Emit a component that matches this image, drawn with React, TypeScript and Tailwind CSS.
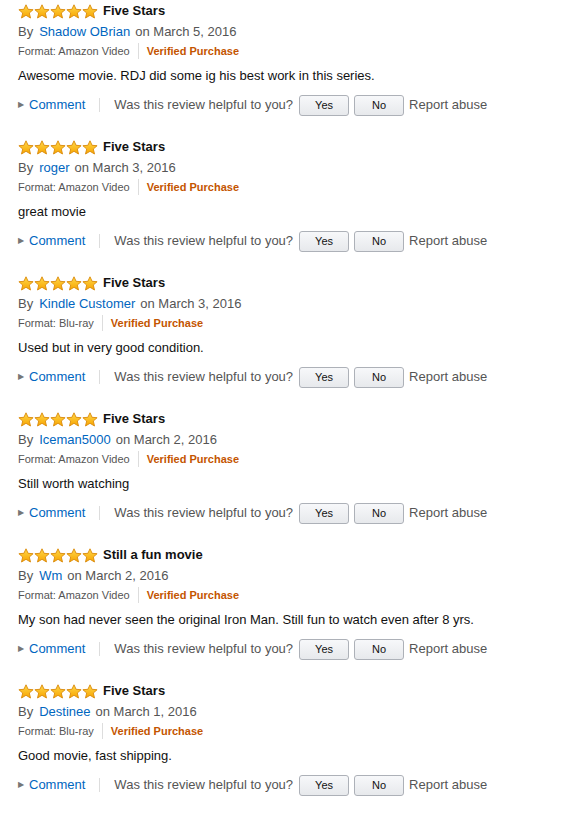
const reviews = [
  { title: "Five Stars", author: "Shadow OBrian", date: "March 5, 2016", format: "Amazon Video", body: "Awesome movie. RDJ did some ig his best work in this series." },
  { title: "Five Stars", author: "roger", date: "March 3, 2016", format: "Amazon Video", body: "great movie" },
  { title: "Five Stars", author: "Kindle Customer", date: "March 3, 2016", format: "Blu-ray", body: "Used but in very good condition." },
  { title: "Five Stars", author: "Iceman5000", date: "March 2, 2016", format: "Amazon Video", body: "Still worth watching" },
  { title: "Still a fun movie", author: "Wm", date: "March 2, 2016", format: "Amazon Video", body: "My son had never seen the original Iron Man. Still fun to watch even after 8 yrs." },
  { title: "Five Stars", author: "Destinee", date: "March 1, 2016", format: "Blu-ray", body: "Good movie, fast shipping." },
];

function Star() {
  return (
    <svg width="16" height="15" viewBox="0 0 16 15">
      <defs>
        <linearGradient id="starfill" x1="0" y1="0" x2="0" y2="1">
          <stop offset="0" stopColor="#ffd84a" />
          <stop offset="1" stopColor="#f7a400" />
        </linearGradient>
      </defs>
      <path
        d="M8 0.8 L10.1 5.3 L15.1 5.7 L11.3 9 L12.5 14 L8 11.3 L3.5 14 L4.7 9 L0.9 5.7 L5.9 5.3 Z"
        fill="url(#starfill)"
        stroke="#d9890a"
        strokeWidth="0.9"
        strokeLinejoin="round"
      />
    </svg>
  );
}

function Review({ r }: { r: (typeof reviews)[number] }) {
  return (
    <div className="h-[136px]">
      <div className="h-[22px] flex items-center">
        <div className="flex">
          <Star />
          <Star />
          <Star />
          <Star />
          <Star />
        </div>
        <span className="ml-[5px] text-[13px] font-bold text-[#111]">{r.title}</span>
      </div>
      <div className="h-[20px] flex items-center text-[13px] text-[#555]">
        <span>By</span>
        <span className="ml-[6px] text-[#0066c0]">{r.author}</span>
        <span className="ml-[5px]">on {r.date}</span>
      </div>
      <div className="h-[18px] flex items-center text-[11px]">
        <span className="text-[#555]">Format: {r.format}</span>
        <span className="mx-[8px] w-px h-[16px] bg-[#ddd]" />
        <span className="text-[#c45500] font-bold">Verified Purchase</span>
      </div>
      <div className="mt-[6px] h-[20px] flex items-center text-[13px] text-[#111]">{r.body}</div>
      <div className="mt-[8px] h-[22px] flex items-center text-[13px]">
        <span className="text-[#767676] text-[8px] mr-[5px]">&#9654;</span>
        <span className="text-[#0066c0]">Comment</span>
        <span className="ml-[14px] mr-[14px] w-px h-[14px] bg-[#ddd]" />
        <span className="text-[#555]">Was this review helpful to you?</span>
        <button className="ml-[6px] w-[50px] h-[21px] rounded-[3px] border border-[#adb1b8] bg-gradient-to-b from-[#f7f8fa] to-[#e7e9ec] text-[11px] text-[#111]">
          Yes
        </button>
        <button className="ml-[5px] w-[50px] h-[21px] rounded-[3px] border border-[#adb1b8] bg-gradient-to-b from-[#f7f8fa] to-[#e7e9ec] text-[11px] text-[#111]">
          No
        </button>
        <span className="ml-[5px] text-[#555]">Report abuse</span>
      </div>
    </div>
  );
}

export default function App() {
  return (
    <div className="w-[566px] h-[815px] bg-white pl-[18px] font-['Liberation_Sans',Arial,sans-serif]">
      {reviews.map((r, i) => (
        <Review key={i} r={r} />
      ))}
    </div>
  );
}
